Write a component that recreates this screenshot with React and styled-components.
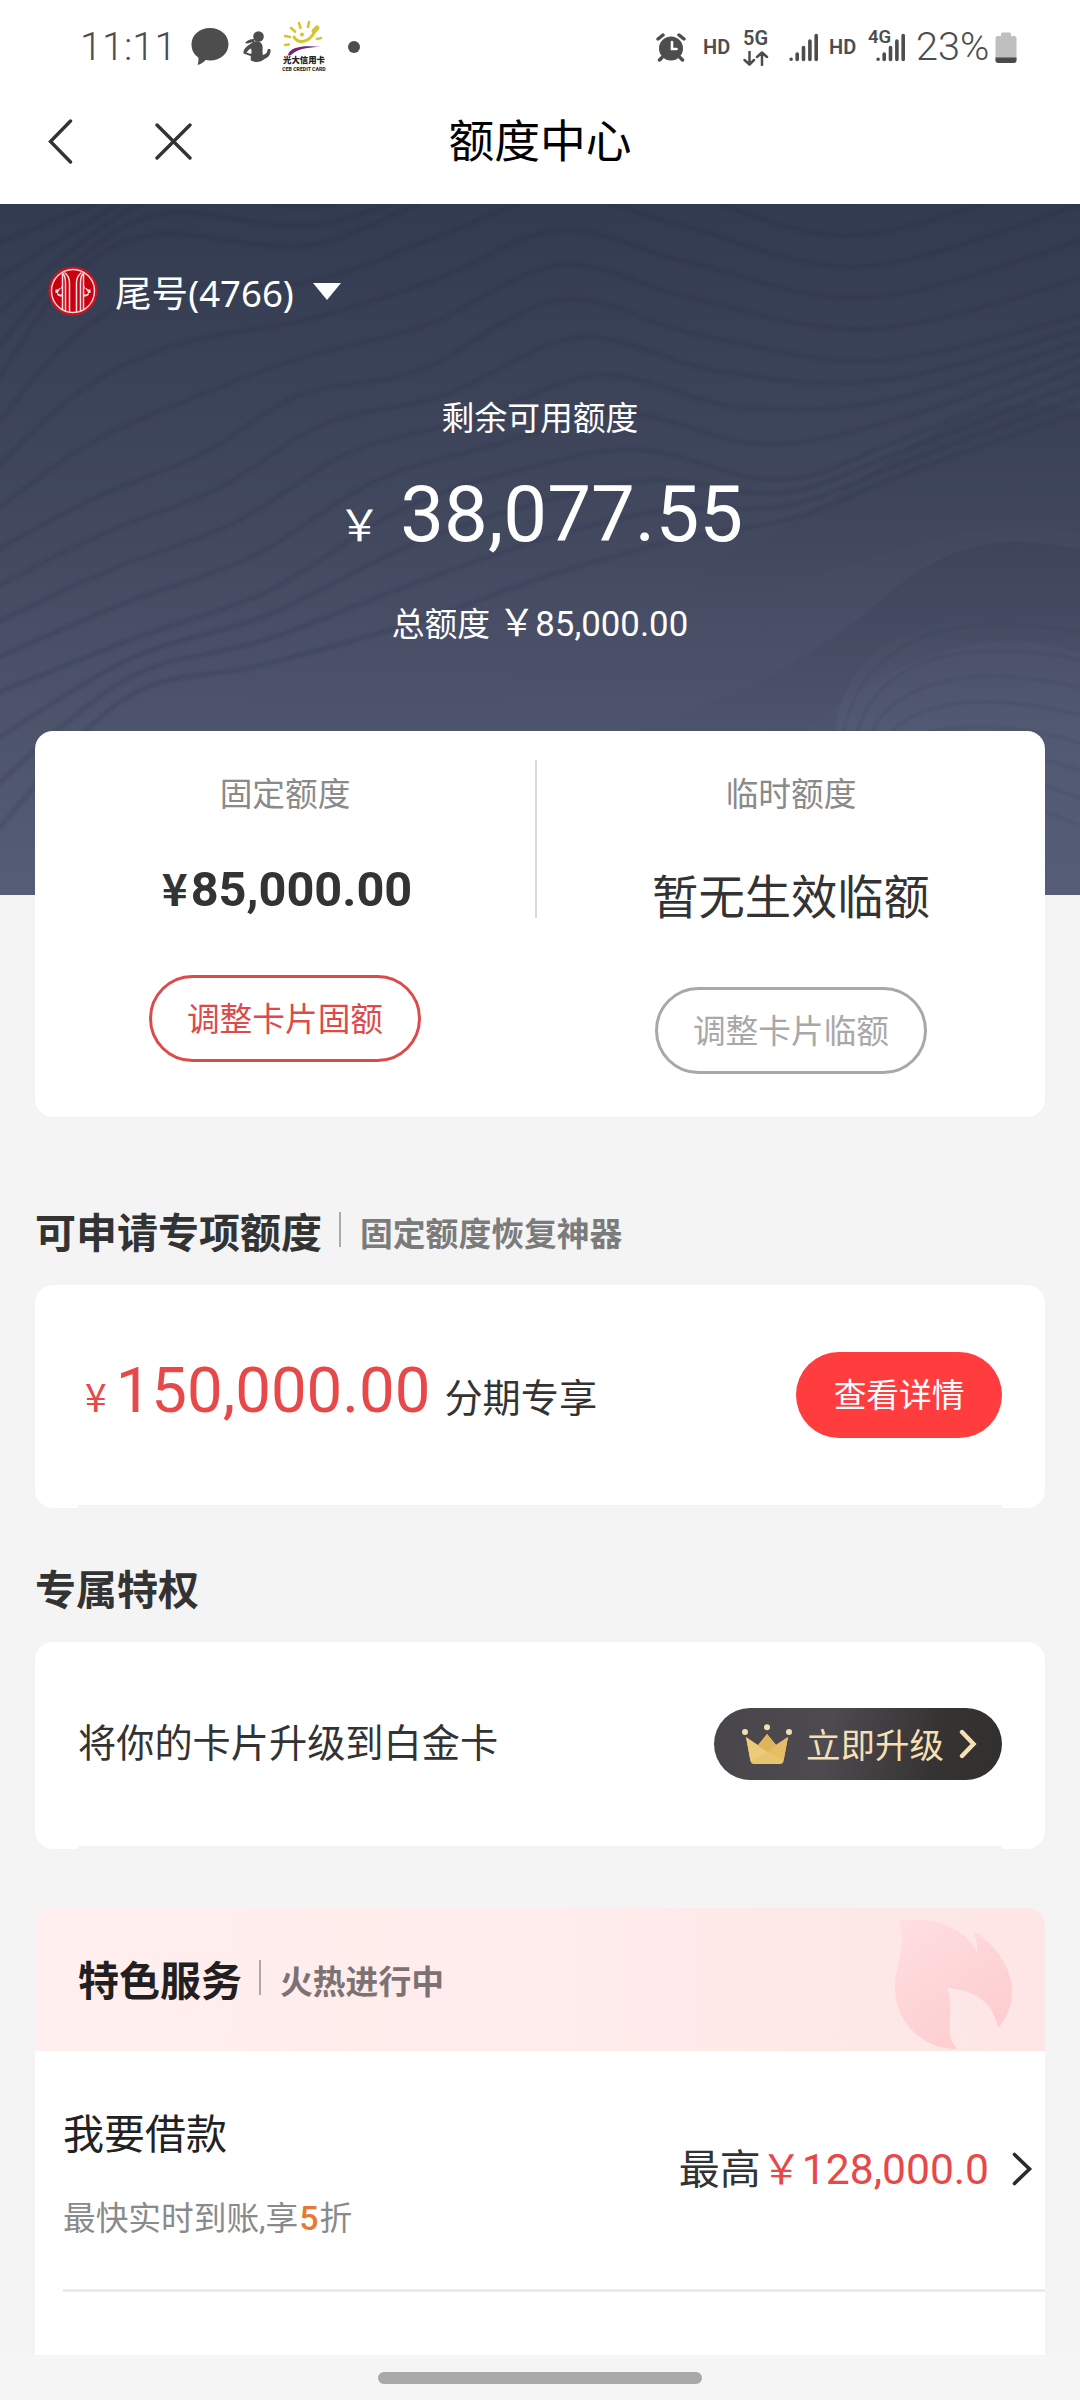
import React from "react";
import styled, { createGlobalStyle } from "styled-components";

const GlobalStyle = createGlobalStyle`
    * {
        box-sizing: border-box;
    }
    body {
        margin: 0;
        background: #f4f4f4;
        color: #333;
        font-family: Roboto, "Noto Sans CJK SC", sans-serif;
    }
    svg {
        display: block;
        flex: none;
    }
`;

// contour lines of the hero background, interpolated between these curves
const guides = [
    [[-20, 250], [90, 205], [200, 150], [330, 165], [480, 140], [620, 90], [760, 120], [900, 100], [1100, 20]],
    [[-20, 410], [60, 290], [150, 235], [310, 245], [450, 190], [560, 160], [680, 190], [860, 235], [1100, 160]],
    [[-20, 560], [90, 500], [200, 455], [300, 395], [420, 370], [560, 300], [700, 335], [880, 360], [1100, 310]],
    [[-20, 700], [130, 640], [270, 590], [400, 510], [520, 470], [640, 450], [780, 480], [900, 440], [1100, 360]],
    [[-20, 900], [120, 720], [260, 690], [420, 660], [560, 610], [690, 570], [800, 530], [920, 480], [1100, 420]],
];

const curve = (pts) => {
    let d = `M${pts[0][0]} ${pts[0][1]}`;
    for (let i = 0; i < pts.length - 1; i++) {
        const a = pts[i - 1] || pts[i];
        const b = pts[i];
        const c = pts[i + 1];
        const e = pts[i + 2] || c;
        d += `C${b[0] + (c[0] - a[0]) / 6} ${b[1] + (c[1] - a[1]) / 6} ${c[0] - (e[0] - b[0]) / 6} ${c[1] - (e[1] - b[1]) / 6} ${c[0]} ${c[1]}`;
    }
    return d;
};

const contours = [];
guides.slice(0, -1).forEach((g, n) => {
    for (let s = 0; s < 4; s++) {
        const t = s / 4;
        contours.push(curve(g.map((p, i) => [
            p[0] + (guides[n + 1][i][0] - p[0]) * t,
            p[1] + (guides[n + 1][i][1] - p[1]) * t - 204,
        ])));
    }
});

const Waves = () => (
    <WaveLayer width="1080" height="691" viewBox="0 0 1080 691" fill="none">
        <defs>
            <linearGradient id="shade" x1="0" y1="0" x2="0" y2="1">
                <stop offset="0" stopColor="#30374c" stopOpacity="0.24" />
                <stop offset="1" stopColor="#30374c" stopOpacity="0" />
            </linearGradient>
            <linearGradient id="hill" x1="0" y1="0" x2="0" y2="1">
                <stop offset="0" stopColor="#656c88" stopOpacity="0" />
                <stop offset="0.4" stopColor="#656c88" stopOpacity="0.2" />
                <stop offset="1" stopColor="#656c88" stopOpacity="0" />
            </linearGradient>
        </defs>
        {contours.map((d, i) => (
            <g key={i} stroke="#262d42">
                <path d={d} strokeOpacity="0.07" strokeWidth="8" />
                <path d={d} strokeOpacity="0.09" strokeWidth="3" />
            </g>
        ))}
        <path d="M700 360C820 320 880 250 960 215C1000 195 1050 200 1080 205V330C960 300 840 380 700 400Z" fill="url(#shade)" />
        <path d="M620 530C760 490 830 440 900 380C960 335 1010 330 1080 345V450C980 410 860 470 780 550Z" fill="url(#shade)" />
        <path d="M835 540C835 440 930 400 1080 410V691H900C860 640 835 600 835 540Z" fill="url(#hill)" />
        {[0, 1, 2, 3, 4, 5, 6, 7].map((n) => (
            <path key={n} d={`M${840 + n * 12} 560C${845 + n * 12} ${440 + n * 22} ${940 + n * 8} ${400 + n * 26} 1090 ${430 + n * 28}`} stroke="#353c52" strokeOpacity="0.1" strokeWidth="4" />
        ))}
    </WaveLayer>
);

const BubbleIcon = () => (
    <svg width="38" height="38" viewBox="0 0 38 38" fill="#4d4d4d">
        <path d="M19 0C29.500 0 37.500 7 37.500 16.300C37.500 25.500 29.500 32.500 19 32.500C17.500 32.500 16 32.400 14.600 32.100C12.500 34.500 10 36.200 6.500 37C7.400 34.800 7.700 32.500 7.300 29.600C3 26.600 0.500 22 0.500 16.300C0.500 7 8.500 0 19 0Z" />
    </svg>
);

const RunnerIcon = () => (
    <svg width="28" height="32" viewBox="0 0 28 32" fill="#4d4d4d">
        <circle cx="15.500" cy="5.500" r="5.300" />
        <path d="M2 12C5 8.500 8 8 12 8L11 11C8 10.500 6 13.500 2 12Z" />
        <path d="M10 11C14 9 19 11 19.500 15C20 18 19 21 20 24C22.500 23 24 22 24.500 20C24 18.500 25.500 17.500 27.500 18.500C28 22 26.500 26 21.500 28C18 31.500 12 32 8 29.500C7 27.500 8.500 26 7.500 25L0.500 22.500C0 18 4 15 10 11ZM3.500 21.500L8 23C9 21 8.500 19 8 17.500C6 18.500 4.500 20 3.500 21.500Z" />
    </svg>
);

const SunIcon = () => (
    <svg width="42" height="36" viewBox="0 0 42 36" fill="none" strokeLinecap="round">
        <g stroke="#d9c32a" strokeWidth="2.600">
            <path d="M16 3L17.500 8M26 2L25 7M8 8L12 11.500M2 16L7 17M2 25L6 24.500M38 18L34 19" />
            <path d="M11 17C15 24 25 23 31 13" strokeWidth="3" />
            <path d="M31 11L34 8" strokeWidth="5" />
        </g>
        <circle cx="19" cy="14.500" r="2" fill="#d9c32a" />
        <path d="M5 35C7 27 20 25 38 27C25 27 14 29 8 35C7 35.800 5.500 35.800 5 35Z" fill="#73256f" />
    </svg>
);

const AlarmIcon = () => (
    <svg width="30" height="29" viewBox="0 0 30 29" fill="none" strokeLinecap="round">
        <circle cx="15" cy="15.500" r="12" fill="#4d4d4d" />
        <path d="M2 6L7 2M28 6L23 2M6 24.500L3.500 27M24 24.500L26.500 27" stroke="#4d4d4d" strokeWidth="3.500" />
        <path d="M16 9V16H20.500" stroke="#fff" strokeWidth="2.600" />
    </svg>
);

const SignalIcon = () => (
    <svg width="30" height="29" viewBox="0 0 30 29" stroke="#4d4d4d" strokeWidth="3.600" strokeLinecap="round">
        <path d="M2.100 26.200V26.300M8.200 21V26.500M14.500 14.500V26.500M20.900 8V26.500M27.200 2.500V26.500" />
    </svg>
);

const DataArrows = () => (
    <svg width="26" height="15" viewBox="0 0 26 15" fill="none" stroke="#4d4d4d" strokeWidth="2.500" strokeLinecap="round" strokeLinejoin="round">
        <path d="M6.500 0.500V13M1.500 9L6.500 13.500L11 9M19 14V2M14 6L19 1.500L24 6" />
    </svg>
);

const BatteryIcon = () => (
    <svg width="22" height="31" viewBox="0 0 22 31">
        <path d="M6 2Q6 0.500 7.500 0.500H14.500Q16 0.500 16 2V4H19Q21.500 4 21.500 6.500V28Q21.500 31 18.500 31H3.500Q0.500 31 0.500 28V6.500Q0.500 4 3 4H6Z" fill="#bfbfbf" />
        <path d="M0.500 25.500H21.500V28Q21.500 31 18.500 31H3.500Q0.500 31 0.500 28Z" fill="#4a4a4a" />
    </svg>
);

const BankLogo = () => (
    <svg width="50" height="50" viewBox="0 0 50 50" fill="none">
        <circle cx="25" cy="25" r="24.500" fill="#cc1420" />
        <circle cx="25" cy="25" r="21.500" fill="#c8000f" stroke="#f3d9dc" strokeWidth="1.400" />
        <g stroke="#f6dfe2" strokeWidth="1.500">
            <path d="M14.500 7.500C17 9 17.500 12 17.500 17V45M35.500 7.500C33 9 32.500 12 32.500 17V45" />
            <path d="M14.500 7.500V43M35.500 7.500V43" />
            <path d="M16.500 6.500C20.500 9.500 21.500 12 21.500 17V46M33.500 6.500C29.500 9.500 28.500 12 28.500 17V46" />
        </g>
        <path d="M14 20V22.500C12.500 21.500 11 22 10 23.500H7.500V27H10C11 28.500 12.500 29 14 28V30.500C11 31 9.500 29.500 9 28M36 20V22.500C37.500 21.500 39 22 40 23.500H42.500V27H40C39 28.500 37.500 29 36 28V30.500C39 31 40.500 29.500 41 28" fill="#f6dfe2" />
    </svg>
);

const CrownIcon = () => (
    <svg width="50" height="41" viewBox="0 0 50 41">
        <path d="M4 13L16 21L25 10L34 21L46 13L41.500 37Q41 40 38 40H12Q9 40 8.500 37Z" fill="#e9c46f" />
        <path d="M25 10L34 21L46 13L41.500 37L25 27Z" fill="#e6bd66" />
        <path d="M25 10L16 22L25 28L34 22Z" fill="#dfb35b" />
        <path d="M25 28L8.500 37L4 13L16 22Z" fill="#eccb7d" />
        <circle cx="3" cy="8" r="3" fill="#f5dfae" />
        <circle cx="25" cy="3.200" r="3" fill="#f5dfae" />
        <circle cx="47" cy="8" r="3" fill="#f5dfae" />
    </svg>
);

const Flame = () => (
    <FlameLayer width="118" height="130" viewBox="0 0 118 130">
        <defs>
            <linearGradient id="flame" x1="0" y1="0" x2="0.6" y2="1">
                <stop offset="0" stopColor="#ffdfe2" />
                <stop offset="1" stopColor="#fdcdcf" />
            </linearGradient>
        </defs>
        <path d="M5 2C35 -4 71 7 83 33C83.500 26 82 20 80 12C103 27 118 50 118 72C118 88 112 100 104 109C99 82 80 71 53 69C60 83 53 105 57 120Q59 126 63 130C28 130 1 103 1 69C1 44 13 30 5 2Z" fill="url(#flame)" />
    </FlameLayer>
);

const App = () => (
    <Page>
        <GlobalStyle />
        <StatusBar>
            <StatusText width="112">11:11</StatusText>
            <BubbleIcon />
            <Spacer width="14" />
            <RunnerIcon />
            <Spacer width="10" />
            <CardApp>
                <SunIcon />
                <CardAppName size="8.4">光大信用卡</CardAppName>
                <CardAppName size="5.2">CEB CREDIT CARD</CardAppName>
            </CardApp>
            <StatusDot />
            <StatusRight>
                <AlarmIcon />
                <Spacer width="17" />
                <Badge width="40">HD</Badge>
                <Network>
                    <Badge>5G</Badge>
                    <DataArrows />
                </Network>
                <Spacer width="20" />
                <SignalIcon />
                <Spacer width="10" />
                <Badge width="39">HD</Badge>
                <SignalGroup>
                    <NetworkTag>4G</NetworkTag>
                    <SignalIcon />
                </SignalGroup>
                <Spacer width="9" />
                <StatusText width="80">23%</StatusText>
                <BatteryIcon />
            </StatusRight>
        </StatusBar>
        <NavBar>
            <NavIcons>
                <svg width="25" height="45" viewBox="0 0 25 45" fill="none" stroke="#333" strokeWidth="3.400" strokeLinecap="round">
                    <path d="M22.500 2L2.500 22.500L22.500 43" />
                </svg>
                <svg width="37" height="37" viewBox="0 0 37 37" stroke="#333" strokeWidth="3.400" strokeLinecap="round">
                    <path d="M2 2L35 35M35 2L2 35" />
                </svg>
            </NavIcons>
            <NavTitle>额度中心</NavTitle>
        </NavBar>
        <Hero>
            <Waves />
            <CardPicker>
                <BankLogo />
                <CardNo>尾号(4766)</CardNo>
                <Triangle />
            </CardPicker>
            <HeroLabel>剩余可用额度</HeroLabel>
            <HeroAmount><HeroYen>￥</HeroYen> 38,077.55</HeroAmount>
            <HeroTotal>总额度 <TotalYen>￥</TotalYen><b>85,000.00</b></HeroTotal>
        </Hero>
        <LimitCard>
            <Limit>
                <LimitLabel>固定额度</LimitLabel>
                <LimitAmount><small>¥</small>85,000.00</LimitAmount>
                <OutlineButton color="#dd4a4a">调整卡片固额</OutlineButton>
            </Limit>
            <Divider />
            <Limit>
                <LimitLabel>临时额度</LimitLabel>
                <LimitNone>暂无生效临额</LimitNone>
                <OutlineButton color="#a8a8a8">调整卡片临额</OutlineButton>
            </Limit>
        </LimitCard>

        <SectionHead top="92">
            <Title>可申请专项额度</Title>
            <Bar />
            <Subtitle>固定额度恢复神器</Subtitle>
        </SectionHead>
        <Card height="223">
            <Special>
                <SpecialYen>¥</SpecialYen>
                <SpecialAmount>150,000.00</SpecialAmount>
                <SpecialNote>分期专享</SpecialNote>
            </Special>
            <RedButton>查看详情</RedButton>
        </Card>

        <SectionHead top="58">
            <Title>专属特权</Title>
        </SectionHead>
        <Card height="207">
            <UpgradeText>将你的卡片升级到白金卡</UpgradeText>
            <UpgradeButton>
                <CrownIcon />
                <span>立即升级</span>
                <svg width="18" height="30" viewBox="0 0 18 30" fill="none" stroke="#f7dfb4" strokeWidth="4.400" strokeLinecap="round">
                    <path d="M3 3L14.500 15L3 27" />
                </svg>
            </UpgradeButton>
        </Card>

        <Services>
            <ServicesHead>
                <Flame />
                <Title dark>特色服务</Title>
                <Bar />
                <Subtitle warm>火热进行中</Subtitle>
            </ServicesHead>
            <ServiceRow>
                <div>
                    <ServiceName>我要借款</ServiceName>
                    <ServiceDesc>最快实时到账,享<b>5</b>折</ServiceDesc>
                </div>
                <ServiceMax>
                    <div>最高<Yen>￥</Yen><Max>128,000.0</Max></div>
                    <svg width="21" height="34" viewBox="0 0 21 34" fill="none" stroke="#2b2b2b" strokeWidth="3.600" strokeLinecap="round">
                        <path d="M2.500 2.500L17.500 17L2.500 31.500" />
                    </svg>
                </ServiceMax>
            </ServiceRow>
        </Services>
        <Footer>
            <HomeBar />
        </Footer>
    </Page>
);

export default App;

const Page = styled.div`
    width: 1080px;
    height: 2400px;
    overflow: hidden;
    display: flex;
    flex-direction: column;
    background: #f4f4f4;
`;

//status bar
const StatusBar = styled.div`
    height: 94px;
    flex: none;
    display: flex;
    align-items: center;
    padding: 0 63px 0 79px;
    background: #fff;
    color: #4d4d4d;
`;

const StatusText = styled.div`
    width: ${(p) => p.width}px;
    padding-left: 1px;
    font-size: 39.700px;
    font-weight: 350;
    line-height: 48px;
    white-space: nowrap;
`;

const Spacer = styled.div`
    width: ${(p) => p.width}px;
    flex: none;
`;

const CardApp = styled.div`
    width: 46px;
    display: flex;
    flex-direction: column;
    align-items: center;
`;

const CardAppName = styled.div`
    font-size: ${(p) => p.size}px;
    line-height: 9px;
    font-weight: 800;
    color: #222;
    white-space: nowrap;
`;

const StatusDot = styled.div`
    width: 12px;
    height: 12px;
    margin-left: 21px;
    border-radius: 50%;
    background: #4d4d4d;
`;

const StatusRight = styled.div`
    display: flex;
    align-items: center;
    margin-left: auto;
`;

const Badge = styled.div`
    width: ${(p) => (p.width ? p.width + "px" : "auto")};
    font-size: 20px;
    font-weight: 600;
    line-height: 20px;
`;

const Network = styled.div`
    display: flex;
    flex-direction: column;
    gap: 3px;
`;

const SignalGroup = styled.div`
    position: relative;
    padding-left: 8px;
`;

//sits over the short bars of the signal
const NetworkTag = styled.div`
    position: absolute;
    top: -6px;
    left: 0;
    font-size: 18.500px;
    font-weight: 600;
    line-height: 20px;
`;

//nav bar
const NavBar = styled.div`
    height: 110px;
    flex: none;
    display: grid;
    grid-template-columns: 270px 1fr 270px;
    align-items: center;
    padding-bottom: 15px;
    background: #fff;
`;

const NavIcons = styled.div`
    display: flex;
    align-items: center;
    gap: 82px;
    padding-left: 48px;
`;

const NavTitle = styled.div`
    padding-top: 3px;
    font-size: 45.800px;
    line-height: 60px;
    color: #000;
    text-align: center;
`;

//hero
const Hero = styled.div`
    position: relative;
    height: 691px;
    flex: none;
    padding-top: 62px;
    color: #fff;
    text-align: center;
    background: linear-gradient(#333b50, #434a60 50%, #565d77);
`;

const WaveLayer = styled.svg`
    position: absolute;
    top: 0;
    left: 0;
`;

const CardPicker = styled.div`
    position: relative;
    display: flex;
    align-items: center;
    height: 50px;
    margin: 0 48px;
`;

const CardNo = styled.div`
    margin: 4px 0 0 17px;
    font-family: "Noto Sans", "Noto Sans CJK SC", sans-serif;
    font-size: 36.600px;
    line-height: 50px;
`;

const Triangle = styled.div`
    margin-left: 19px;
    border: 14px solid transparent;
    border-top: 17px solid #fff;
    border-bottom: 0;
`;

const HeroLabel = styled.div`
    position: relative;
    padding-top: 83px;
    font-size: 32.800px;
    line-height: 40px;
`;

const HeroAmount = styled.div`
    position: relative;
    margin-top: 36px;
    padding-left: 1px;
    font-size: 78px;
    line-height: 80px;
`;

const HeroYen = styled.span`
    font-family: "Noto Sans CJK SC", sans-serif;
    font-size: 43px;
    line-height: 1;
`;

const HeroTotal = styled.div`
    position: relative;
    margin-top: 49px;
    font-size: 32.800px;
    line-height: 40px;

    b {
        font-size: 34.800px;
        font-weight: 400;
    }
`;

const TotalYen = styled.span`
    font-size: 37px;
    line-height: 1;
`;

//limits
const LimitCard = styled.div`
    position: relative;
    flex: none;
    display: grid;
    grid-template-columns: 500px 2px 1fr;
    height: 386px;
    margin: -164px 35px 0;
    border-radius: 18px;
    background: #fff;
`;

const Limit = styled.div`
    display: flex;
    flex-direction: column;
    align-items: center;
    padding-top: 44px;
`;

const Divider = styled.div`
    height: 158px;
    margin-top: 29px;
    background: #d9d9d9;
`;

const LimitLabel = styled.div`
    font-size: 32.700px;
    line-height: 40px;
    color: #8a8a8a;
`;

const LimitAmount = styled.div`
    margin: 47px 0 57px;
    padding-left: 4px;
    font-size: 48.700px;
    font-weight: 700;
    line-height: 56px;

    small {
        margin-right: 3px;
        font-family: "Noto Sans CJK SC", sans-serif;
        font-size: 44px;
        font-weight: 700;
        line-height: 1;
    }
`;

const LimitNone = styled.div`
    margin: 55px 0 61px;
    font-size: 46.300px;
    line-height: 56px;
`;

const OutlineButton = styled.button`
    width: 272px;
    height: 87px;
    padding: 0 0 5px;
    border: 3px solid ${(p) => p.color};
    border-radius: 44px;
    background: #fff;
    color: ${(p) => p.color};
    font-family: inherit;
    font-size: 32.700px;
`;

//sections
const SectionHead = styled.div`
    flex: none;
    display: flex;
    align-items: center;
    height: 50px;
    margin: ${(p) => p.top}px 35px 26px;
`;

const Title = styled.div`
    font-size: 41px;
    font-weight: 700;
    line-height: 50px;
    color: ${(p) => (p.dark ? "#231f20" : "#333")};
`;

const Bar = styled.div`
    width: 2px;
    height: 35px;
    margin: 0 19px 9px 17px;
    background: #aaa;
`;

const Subtitle = styled.div`
    padding-top: 2px;
    font-size: 32.800px;
    font-weight: 700;
    line-height: 40px;
    color: ${(p) => (p.warm ? "#7d7273" : "#7b7b7b")};
`;

const Card = styled.div`
    flex: none;
    display: flex;
    align-items: center;
    justify-content: space-between;
    height: ${(p) => p.height}px;
    margin: 0 35px;
    padding: 0 43px;
    border-radius: 18px;
    background: linear-gradient(#f4f4f4, #f4f4f4) center bottom / 924px 3px no-repeat #fff;
`;

const Special = styled.div`
    display: flex;
    align-items: baseline;
    padding: 0 0 12px 7px;
    color: #e84848;
`;

const SpecialYen = styled.span`
    font-family: "Noto Sans CJK SC", sans-serif;
    font-size: 39px;
    line-height: 60px;
`;

const SpecialAmount = styled.span`
    margin-left: 9px;
    font-size: 63.500px;
    line-height: 70px;
`;

const SpecialNote = styled.span`
    margin-left: 14px;
    font-size: 38.200px;
    color: #333;
`;

const RedButton = styled.button`
    width: 206px;
    height: 86px;
    margin-bottom: 3px;
    padding: 0 0 6px;
    border: none;
    border-radius: 43px;
    background: #ff3d3e;
    color: #fff;
    font-family: inherit;
    font-size: 32.700px;
`;

const UpgradeText = styled.div`
    font-size: 38.200px;
    line-height: 50px;
    padding-bottom: 3px;
`;

const UpgradeButton = styled.div`
    display: flex;
    align-items: center;
    width: 288px;
    height: 72px;
    margin-bottom: 3px;
    padding-left: 28px;
    border-radius: 36px;
    background: linear-gradient(100deg, #48464b, #4d4a50 40%, #363433 75%, #32302f);
    color: #f7dfb4;
    font-size: 34.500px;

    span {
        margin: 0 15px 3px 14px;
    }
`;

//services
const Services = styled.div`
    flex: none;
    height: 447px;
    margin: 59px 35px 0;
    border-radius: 18px 18px 0 0;
    overflow: hidden;
    background: #fff;
`;

const ServicesHead = styled.div`
    position: relative;
    display: flex;
    align-items: center;
    height: 143px;
    padding: 4px 0 0 43px;
    background: linear-gradient(90deg, #ffefee, #ffecec 50%, #fde6e5);
`;

const FlameLayer = styled.svg`
    position: absolute;
    right: 33px;
    bottom: 2px;
`;

const ServiceRow = styled.div`
    display: flex;
    justify-content: space-between;
    height: 241px;
    margin-left: 28px;
    padding: 59px 12px 0 0;
    border-bottom: 3px solid #ebebeb;
`;

const ServiceName = styled.div`
    font-size: 41px;
    line-height: 50px;
    color: #222;
`;

const ServiceDesc = styled.div`
    margin-top: 39px;
    font-size: 32.700px;
    line-height: 40px;
    color: #8a8a8a;

    b {
        padding: 0 1px;
        color: #e87835;
        font-size: 34px;
        font-weight: 500;
        line-height: 1;
    }
`;

const ServiceMax = styled.div`
    display: flex;
    align-items: center;
    height: 50px;
    margin-top: 34px;
    font-size: 41px;
    line-height: 50px;
`;

const Yen = styled.span`
    color: #e84848;
`;

const Max = styled.span`
    margin-right: 23px;
    color: #e84848;
    font-size: 42.600px;
`;

const Footer = styled.div`
    flex: 1;
    display: flex;
    justify-content: center;
    align-items: flex-start;
    padding-top: 17px;
    background: #f5f5f5;
`;

const HomeBar = styled.div`
    width: 324px;
    height: 12px;
    border-radius: 6px;
    background: #a9a9a9;
`;
